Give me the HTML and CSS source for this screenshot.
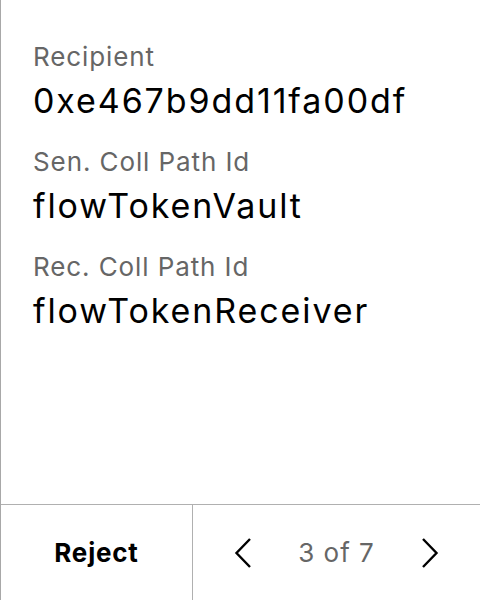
FILE: index.html
```html
<!DOCTYPE html>
<html>
<head>
<meta charset="utf-8">
<link rel="stylesheet" href="styles.css">
</head>
<body>
<div class="screen">
  <div class="content">
    <div class="field">
      <div class="label">Recipient</div>
      <div class="value">0xe467b9dd11fa00df</div>
    </div>
    <div class="field">
      <div class="label">Sen. Coll Path Id</div>
      <div class="value">flowTokenVault</div>
    </div>
    <div class="field">
      <div class="label">Rec. Coll Path Id</div>
      <div class="value">flowTokenReceiver</div>
    </div>
  </div>
  <div class="footer">
    <div class="reject">Reject</div>
    <div class="pager">
      <svg class="chev" width="18" height="32" viewBox="0 0 18 32"><path d="M16 2 L2.5 16 L16 30" fill="none" stroke="#000" stroke-width="2.4"/></svg>
      <span class="count">3 of 7</span>
      <svg class="chev" width="18" height="32" viewBox="0 0 18 32"><path d="M2 2 L15.5 16 L2 30" fill="none" stroke="#000" stroke-width="2.4"/></svg>
    </div>
  </div>
</div>
</body>
</html>
```

FILE: styles.css
```css
html, body {
  margin: 0;
  padding: 0;
  background: #fff;
}
body {
  font-family: Inter, "Noto Sans", sans-serif;
  color: #000;
}
.screen {
  height: 600px;
  display: flex;
  flex-direction: column;
  border-left: 1px solid #a8a8a8;
  box-sizing: border-box;
}
.content {
  flex: 1;
  padding: 41px 0 0 32px;
  display: flex;
  flex-direction: column;
  gap: 25px;
}
.field {
  display: flex;
  flex-direction: column;
  gap: 8px;
}
.label {
  font-size: 26px;
  line-height: 32px;
  letter-spacing: 0.9px;
  color: #666;
}
.value {
  font-size: 34px;
  line-height: 40px;
  letter-spacing: 1.9px;
  color: #000;
}
.footer {
  height: 96px;
  border-top: 1px solid #b0b0b0;
  display: flex;
  box-sizing: border-box;
}
.reject {
  width: 191px;
  border-right: 1px solid #b0b0b0;
  display: flex;
  align-items: center;
  justify-content: center;
  font-size: 26px;
  font-weight: 700;
  letter-spacing: 0.8px;
}
.pager {
  flex: 1;
  display: flex;
  align-items: center;
  justify-content: center;
  gap: 46px;
}
.count {
  font-size: 26px;
  letter-spacing: 1px;
  color: #666;
}
.chev {
  display: block;
}
```
